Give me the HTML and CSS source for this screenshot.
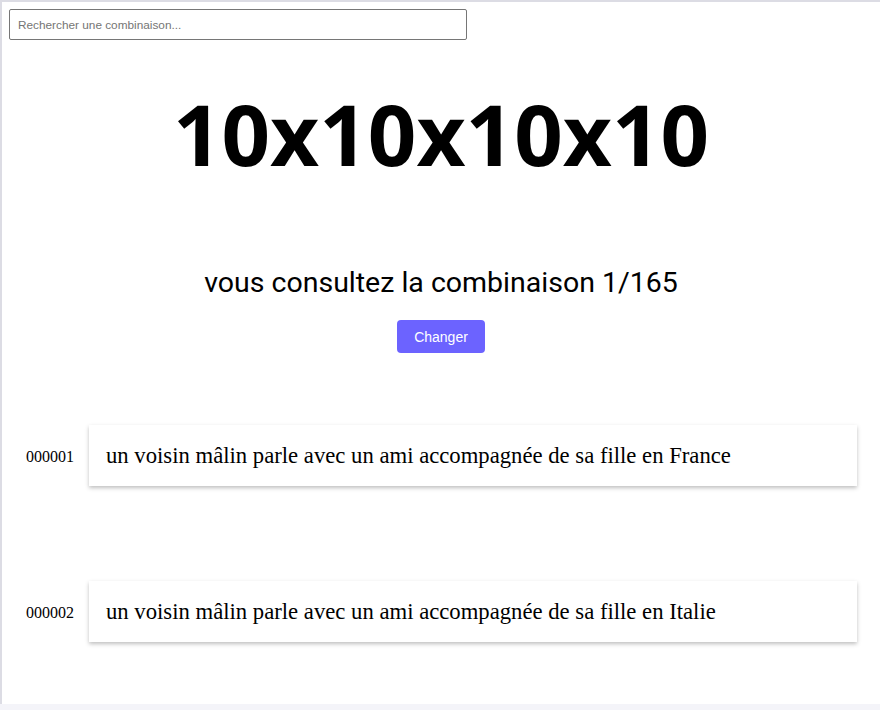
FILE: index.html
```html
<!DOCTYPE html>
<html lang="fr">

<head>
    <meta charset="UTF-8">
    <meta name="viewport" content="width=device-width, initial-scale=1.0">
    <title>10x10x10x10</title>
    <link rel="stylesheet" href="styles.css">
</head>

<body>
    <div class="page">
        <input type="text" class="search" placeholder="Rechercher une combinaison...">

        <h1 class="title">10x10x10x10</h1>

        <p class="subtitle">vous consultez la combinaison 1/165</p>
        <button class="change-btn" type="button">Changer</button>

        <div class="list">
            <div class="row">
                <span class="num">000001</span>
                <div class="card">un voisin mâlin parle avec un ami accompagnée de sa fille en France</div>
            </div>
            <div class="row">
                <span class="num">000002</span>
                <div class="card">un voisin mâlin parle avec un ami accompagnée de sa fille en Italie</div>
            </div>
        </div>
    </div>
</body>

</html>
```

FILE: styles.css
```css
body {
    margin: 0;
    background-color: #f4f4f9;
    font-family: "Liberation Serif", serif;
}

.page {
    height: 704px;
    background: #fff;
    border-top: 2px solid #dcdce4;
    border-left: 2px solid #dcdce4;
    padding-top: 7px;
    box-sizing: border-box;
}

.search {
    display: block;
    margin-left: 7px;
    width: 458px;
    height: 31px;
    box-sizing: border-box;
    padding: 0 8px;
    border: 1px solid #767676;
    border-radius: 2px;
    font-family: "Liberation Sans", Arial, sans-serif;
    font-size: 11.8px;
}

.search::placeholder {
    color: #757575;
}

.title {
    margin: 43px 0 0;
    text-align: center;
    font-family: "Open Sans", sans-serif;
    font-weight: 700;
    font-size: 85px;
    line-height: 100px;
    color: #000;
}

.subtitle {
    margin: 83px 0 0;
    text-align: center;
    font-family: Roboto, sans-serif;
    font-size: 28.5px;
    line-height: 34px;
    color: #000;
}

.change-btn {
    display: block;
    margin: 20px auto 0;
    width: 88px;
    height: 33px;
    background-color: #6c63ff;
    color: #fff;
    border: none;
    border-radius: 4px;
    font-family: "Liberation Sans", Arial, sans-serif;
    font-size: 14px;
    cursor: pointer;
}

.list {
    margin-top: 72px;
    display: flex;
    flex-direction: column;
    gap: 95px;
}

.row {
    display: flex;
    align-items: center;
    padding-right: 23px;
}

.num {
    width: 87px;
    padding-left: 24px;
    padding-top: 3px;
    box-sizing: border-box;
    font-size: 16px;
}

.card {
    flex: 1;
    height: 61px;
    display: flex;
    align-items: center;
    padding: 1px 17px 0;
    box-sizing: border-box;
    background: #fff;
    box-shadow: 0 2px 4px rgba(0, 0, 0, 0.25);
    font-size: 22.7px;
}
```
